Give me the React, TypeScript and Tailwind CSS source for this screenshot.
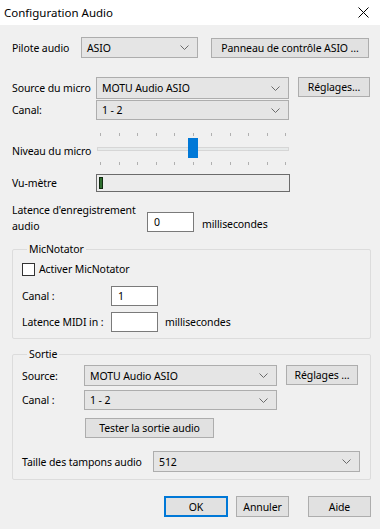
import React from "react";

const Chevron = () => (
  <svg width="9" height="5" viewBox="0 0 9 5" className="shrink-0">
    <polyline points="0.5,0.5 4.5,4.5 8.5,0.5" fill="none" stroke="#6a6a6a" strokeWidth="1" />
  </svg>
);

const Combo = ({ value, w, h = 21 }: { value: string; w: string; h?: number }) => (
  <div
    className={`${w} shrink-0 flex items-center justify-between border border-[#adadad] bg-[#e5e5e5] pl-[5px] pr-[8px] box-border`}
    style={{ height: h }}
  >
    <span>{value}</span>
    <Chevron />
  </div>
);

const Btn = ({ label, w, cls = "" }: { label: string; w: string; cls?: string }) => (
  <div className={`${w} shrink-0 h-[20px] flex items-center justify-center border border-[#adadad] bg-[#e1e1e1] box-border ${cls}`}>
    {label}
  </div>
);

const Input = ({ value = "", w = "w-[47px]", cls = "" }: { value?: string; w?: string; cls?: string }) => (
  <div className={`${w} shrink-0 h-[20px] border border-[#7a7a7a] bg-white flex items-center pl-[6px] box-border ${cls}`}>
    {value}
  </div>
);

export default function App() {
  const ticks = Array.from({ length: 11 });
  return (
    <div
      className="w-[380px] h-[529px] bg-[#f0f0f0] text-[#000] overflow-hidden text-[10.5px] tracking-[-0.1px] leading-[16px] whitespace-nowrap"
      style={{ fontFamily: '"Noto Sans", "Open Sans", sans-serif' }}
    >
      <div className="h-[25px] bg-white flex items-center justify-between pl-[4px] pr-[11px]">
        <span className="text-[11.5px] tracking-normal">Configuration Audio</span>
        <svg width="11" height="11" viewBox="0 0 11 11">
          <path d="M0.5 0.5 L10.5 10.5 M10.5 0.5 L0.5 10.5" stroke="#000" strokeWidth="1" />
        </svg>
      </div>
      <div className="pl-[12px] pr-[9px] pt-[12px]">
        {/* Pilote */}
        <div className="flex items-center h-[21px]">
          <span className="w-[69px] shrink-0">Pilote audio</span>
          <Combo value="ASIO" w="w-[117px]" />
          <Btn label="Panneau de contrôle ASIO ..." w="w-[158px]" cls="ml-[13px]" />
        </div>
        {/* Source micro */}
        <div className="flex items-center h-[22px] mt-[19px]">
          <span className="w-[84px] shrink-0">Source du micro</span>
          <Combo value="MOTU Audio ASIO" w="w-[193px]" h={22} />
          <Btn label="Réglages..." w="w-[72px]" cls="ml-[9px] self-start" />
        </div>
        <div className="flex items-center h-[20px] mt-[1px]">
          <span className="w-[84px] shrink-0">Canal:</span>
          <Combo value="1 - 2" w="w-[193px]" h={20} />
        </div>
        {/* Slider */}
        <div className="flex items-center h-[36px] mt-[11px]">
          <span className="w-[84px] shrink-0 pt-[4px]">Niveau du micro</span>
          <div className="relative w-[194px] h-[36px] flex flex-col justify-between pt-[2px] pb-[2px]">
            <div className="flex justify-between px-[4px]">
              {ticks.map((_, i) => (
                <div key={i} className="w-px h-[3px] bg-[#b0b0b0]" />
              ))}
            </div>
            <div className="h-[4px] border border-[#d6d6d6] bg-[#e7eaea] mx-[1px]" />
            <div className="flex justify-between px-[4px]">
              {ticks.map((_, i) => (
                <div key={i} className="w-px h-[3px] bg-[#b0b0b0]" />
              ))}
            </div>
            <div className="absolute left-[92px] top-[7px] w-[10px] h-[20px] bg-[#0078d7]" />
          </div>
        </div>
        {/* Vu-metre */}
        <div className="flex items-center h-[18px] mt-[7px]">
          <span className="w-[84px] shrink-0">Vu-mètre</span>
          <div className="w-[194px] h-[18px] border border-[#6b6b6b] bg-[#ececec] flex items-center pl-[2px] box-border">
            <div className="w-[4px] h-[12px] bg-[#2f6f2f] border border-[#102a10] box-border" />
          </div>
        </div>
        {/* Latence */}
        <div className="flex items-end mt-[10px]">
          <span className="w-[135px] shrink-0 leading-[16px]">
            Latence d'enregistrement
            <br />
            audio
          </span>
          <Input value="0" cls="mb-[2px]" />
          <span className="ml-[8px] pb-[2px]">millisecondes</span>
        </div>
        {/* MicNotator */}
        <fieldset className="mt-[8px] border border-[#dcdcdc] pl-[9px] pr-[9px] pb-[6px] rounded-[2px]">
          <legend className="ml-[5px] px-[2px] leading-[14px]">MicNotator</legend>
          <div className="flex items-center mt-[6px] h-[14px]">
            <div className="w-[13px] h-[13px] border border-[#333] bg-white box-border" />
            <span className="ml-[4px]">Activer MicNotator</span>
          </div>
          <div className="flex items-center mt-[10px] h-[20px]">
            <span className="w-[89px] shrink-0">Canal :</span>
            <Input value="1" />
          </div>
          <div className="flex items-center mt-[6px] h-[20px]">
            <span className="w-[89px] shrink-0">Latence MIDI in :</span>
            <Input />
            <span className="ml-[7px]">millisecondes</span>
          </div>
        </fieldset>
        {/* Sortie */}
        <fieldset className="mt-[8px] border border-[#dcdcdc] pl-[9px] pr-[9px] pb-[7px] rounded-[2px]">
          <legend className="ml-[5px] px-[2px] leading-[14px]">Sortie</legend>
          <div className="flex items-center h-[21px] mt-[4px]">
            <span className="w-[62px] shrink-0">Source:</span>
            <Combo value="MOTU Audio ASIO" w="w-[193px]" />
            <Btn label="Réglages ..." w="w-[72px]" cls="ml-[9px] self-start" />
          </div>
          <div className="flex items-center h-[20px] mt-[4px]">
            <span className="w-[62px] shrink-0">Canal :</span>
            <Combo value="1 - 2" w="w-[193px]" h={20} />
          </div>
          <div className="flex mt-[8px]">
            <Btn label="Tester la sortie audio" w="w-[129px]" cls="ml-[63px]" />
          </div>
          <div className="flex items-center h-[21px] mt-[13px]">
            <span className="w-[131px] shrink-0">Taille des tampons audio</span>
            <Combo value="512" w="w-[207px]" />
          </div>
        </fieldset>
        {/* Buttons */}
        <div className="flex justify-end mt-[16px]">
          <div className="w-[64px] h-[21px] flex items-center justify-center border-2 border-[#0078d7] bg-[#e1e1e1] box-border">
            OK
          </div>
          <Btn label="Annuler" w="w-[53px]" cls="ml-[8px] h-[21px]" />
          <Btn label="Aide" w="w-[63px]" cls="ml-[19px] h-[21px]" />
        </div>
      </div>
    </div>
  );
}
